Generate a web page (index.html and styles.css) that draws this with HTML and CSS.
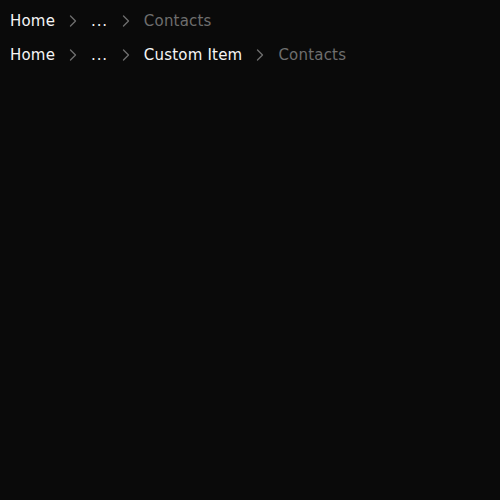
FILE: index.html
```html
<!DOCTYPE html>
<html>
<head>
<meta charset="utf-8">
<link rel="stylesheet" href="styles.css">
</head>
<body>
<div class="page">
  <nav class="crumbs">
    <span class="item">Home</span>
    <svg class="sep" viewBox="0 0 24 24"><path d="M9 6l6 6-6 6"/></svg>
    <span class="item more">...</span>
    <svg class="sep" viewBox="0 0 24 24"><path d="M9 6l6 6-6 6"/></svg>
    <span class="item current">Contacts</span>
  </nav>
  <nav class="crumbs">
    <span class="item">Home</span>
    <svg class="sep" viewBox="0 0 24 24"><path d="M9 6l6 6-6 6"/></svg>
    <span class="item more">...</span>
    <svg class="sep" viewBox="0 0 24 24"><path d="M9 6l6 6-6 6"/></svg>
    <span class="item">Custom Item</span>
    <svg class="sep" viewBox="0 0 24 24"><path d="M9 6l6 6-6 6"/></svg>
    <span class="item current">Contacts</span>
  </nav>
</div>
</body>
</html>
```
FILE: styles.css
```css
html, body {
  margin: 0;
  height: 100%;
  background: #0a0a0a;
}
.page {
  display: flex;
  flex-direction: column;
  gap: 14px;
  padding: 11px 10px;
  font-family: "DejaVu Sans", sans-serif;
  font-size: 15px;
  letter-spacing: 0.2px;
  color: #f5f5f5;
}
.crumbs {
  display: flex;
  align-items: center;
  gap: 8px;
  height: 20px;
}
.item.more {
  letter-spacing: 0.8px;
}
.item.current {
  color: #6e6e6e;
}
.sep {
  width: 20px;
  height: 20px;
  fill: none;
  stroke: #6e6e6e;
  stroke-width: 1.6;
  stroke-linecap: round;
  stroke-linejoin: round;
}
```
